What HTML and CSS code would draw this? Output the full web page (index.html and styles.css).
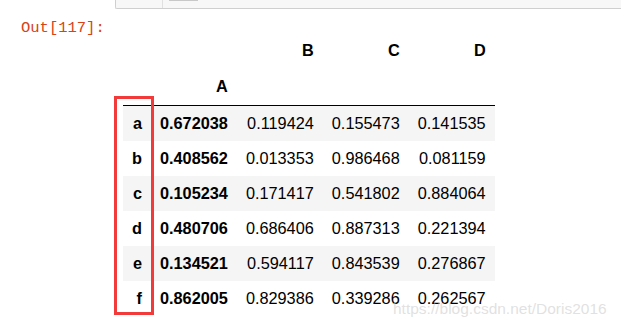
FILE: index.html
```html
<!DOCTYPE html>
<html lang="en">
<head>
    <meta charset="UTF-8">
    <title>Out[117]</title>
    <link rel="stylesheet" href="styles.css">
</head>
<body>
    <div class="input-area">
        <div class="input-prompt"></div>
        <div class="input-code"><span class="code-bar"></span></div>
    </div>

    <div class="output">
        <div class="prompt">Out[117]:</div>
        <table class="dataframe">
            <thead>
                <tr>
                    <th></th>
                    <th></th>
                    <th>B</th>
                    <th>C</th>
                    <th>D</th>
                </tr>
                <tr class="index-names">
                    <th></th>
                    <th>A</th>
                    <th></th>
                    <th></th>
                    <th></th>
                </tr>
            </thead>
            <tbody>
                <tr><th>a</th><th>0.672038</th><td>0.119424</td><td>0.155473</td><td>0.141535</td></tr>
                <tr><th>b</th><th>0.408562</th><td>0.013353</td><td>0.986468</td><td>0.081159</td></tr>
                <tr><th>c</th><th>0.105234</th><td>0.171417</td><td>0.541802</td><td>0.884064</td></tr>
                <tr><th>d</th><th>0.480706</th><td>0.686406</td><td>0.887313</td><td>0.221394</td></tr>
                <tr><th>e</th><th>0.134521</th><td>0.594117</td><td>0.843539</td><td>0.276867</td></tr>
                <tr><th>f</th><th>0.862005</th><td>0.829386</td><td>0.339286</td><td>0.262567</td></tr>
            </tbody>
        </table>
    </div>

    <!-- marca sobre la columna del indice -->
    <div class="highlight"></div>
    <div class="watermark">https://blog.csdn.net/Doris2016</div>
</body>
</html>
```

FILE: styles.css
```css
body {
    margin: 0;
    background: #fff;
    font-family: 'Liberation Sans', Arial, sans-serif;
    color: #000;
    position: relative;
    height: 328px;
    overflow: hidden;
}

.input-area {
    display: flex;
    margin-left: 115px;
    height: 8px;
    background: #f7f7f7;
    border-left: 1px solid #cfcfcf;
    border-bottom: 1px solid #cfcfcf;
    border-bottom-left-radius: 2px;
}

.input-prompt {
    width: 46px;
    border-right: 1px solid #e0e0e0;
}

.input-code {
    padding-left: 6px;
}

.code-bar {
    display: block;
    width: 29px;
    height: 1px;
    background: #c8c8c8;
}

.output {
    display: flex;
    align-items: flex-start;
    padding: 9px 0 0 21px;
}

.prompt {
    width: 102px;
    font-family: 'Liberation Mono', 'DejaVu Sans Mono', monospace;
    font-size: 15.5px;
    line-height: 20px;
    color: #d84315;
}

.dataframe {
    margin-top: 15px;
    border-collapse: collapse;
    border-spacing: 0;
    font-size: 16.3px;
}

.dataframe th,
.dataframe td {
    padding: 8px 9px;
    line-height: 19px;
    text-align: right;
    white-space: nowrap;
}

.dataframe th {
    font-weight: bold;
}

.dataframe thead {
    border-bottom: 1px solid #000;
}

.dataframe thead th {
    padding-top: 8px;
    padding-bottom: 9px;
}

.dataframe tbody tr:nth-child(odd) {
    background: #f5f5f5;
}

.highlight {
    position: absolute;
    left: 114px;
    top: 96px;
    width: 34px;
    height: 213px;
    border: 3px solid #f23a3a;
}

.watermark {
    position: absolute;
    left: 393px;
    top: 300px;
    font-size: 15.5px;
    line-height: 18px;
    color: rgba(200, 200, 200, 0.55);
    white-space: nowrap;
}
```
